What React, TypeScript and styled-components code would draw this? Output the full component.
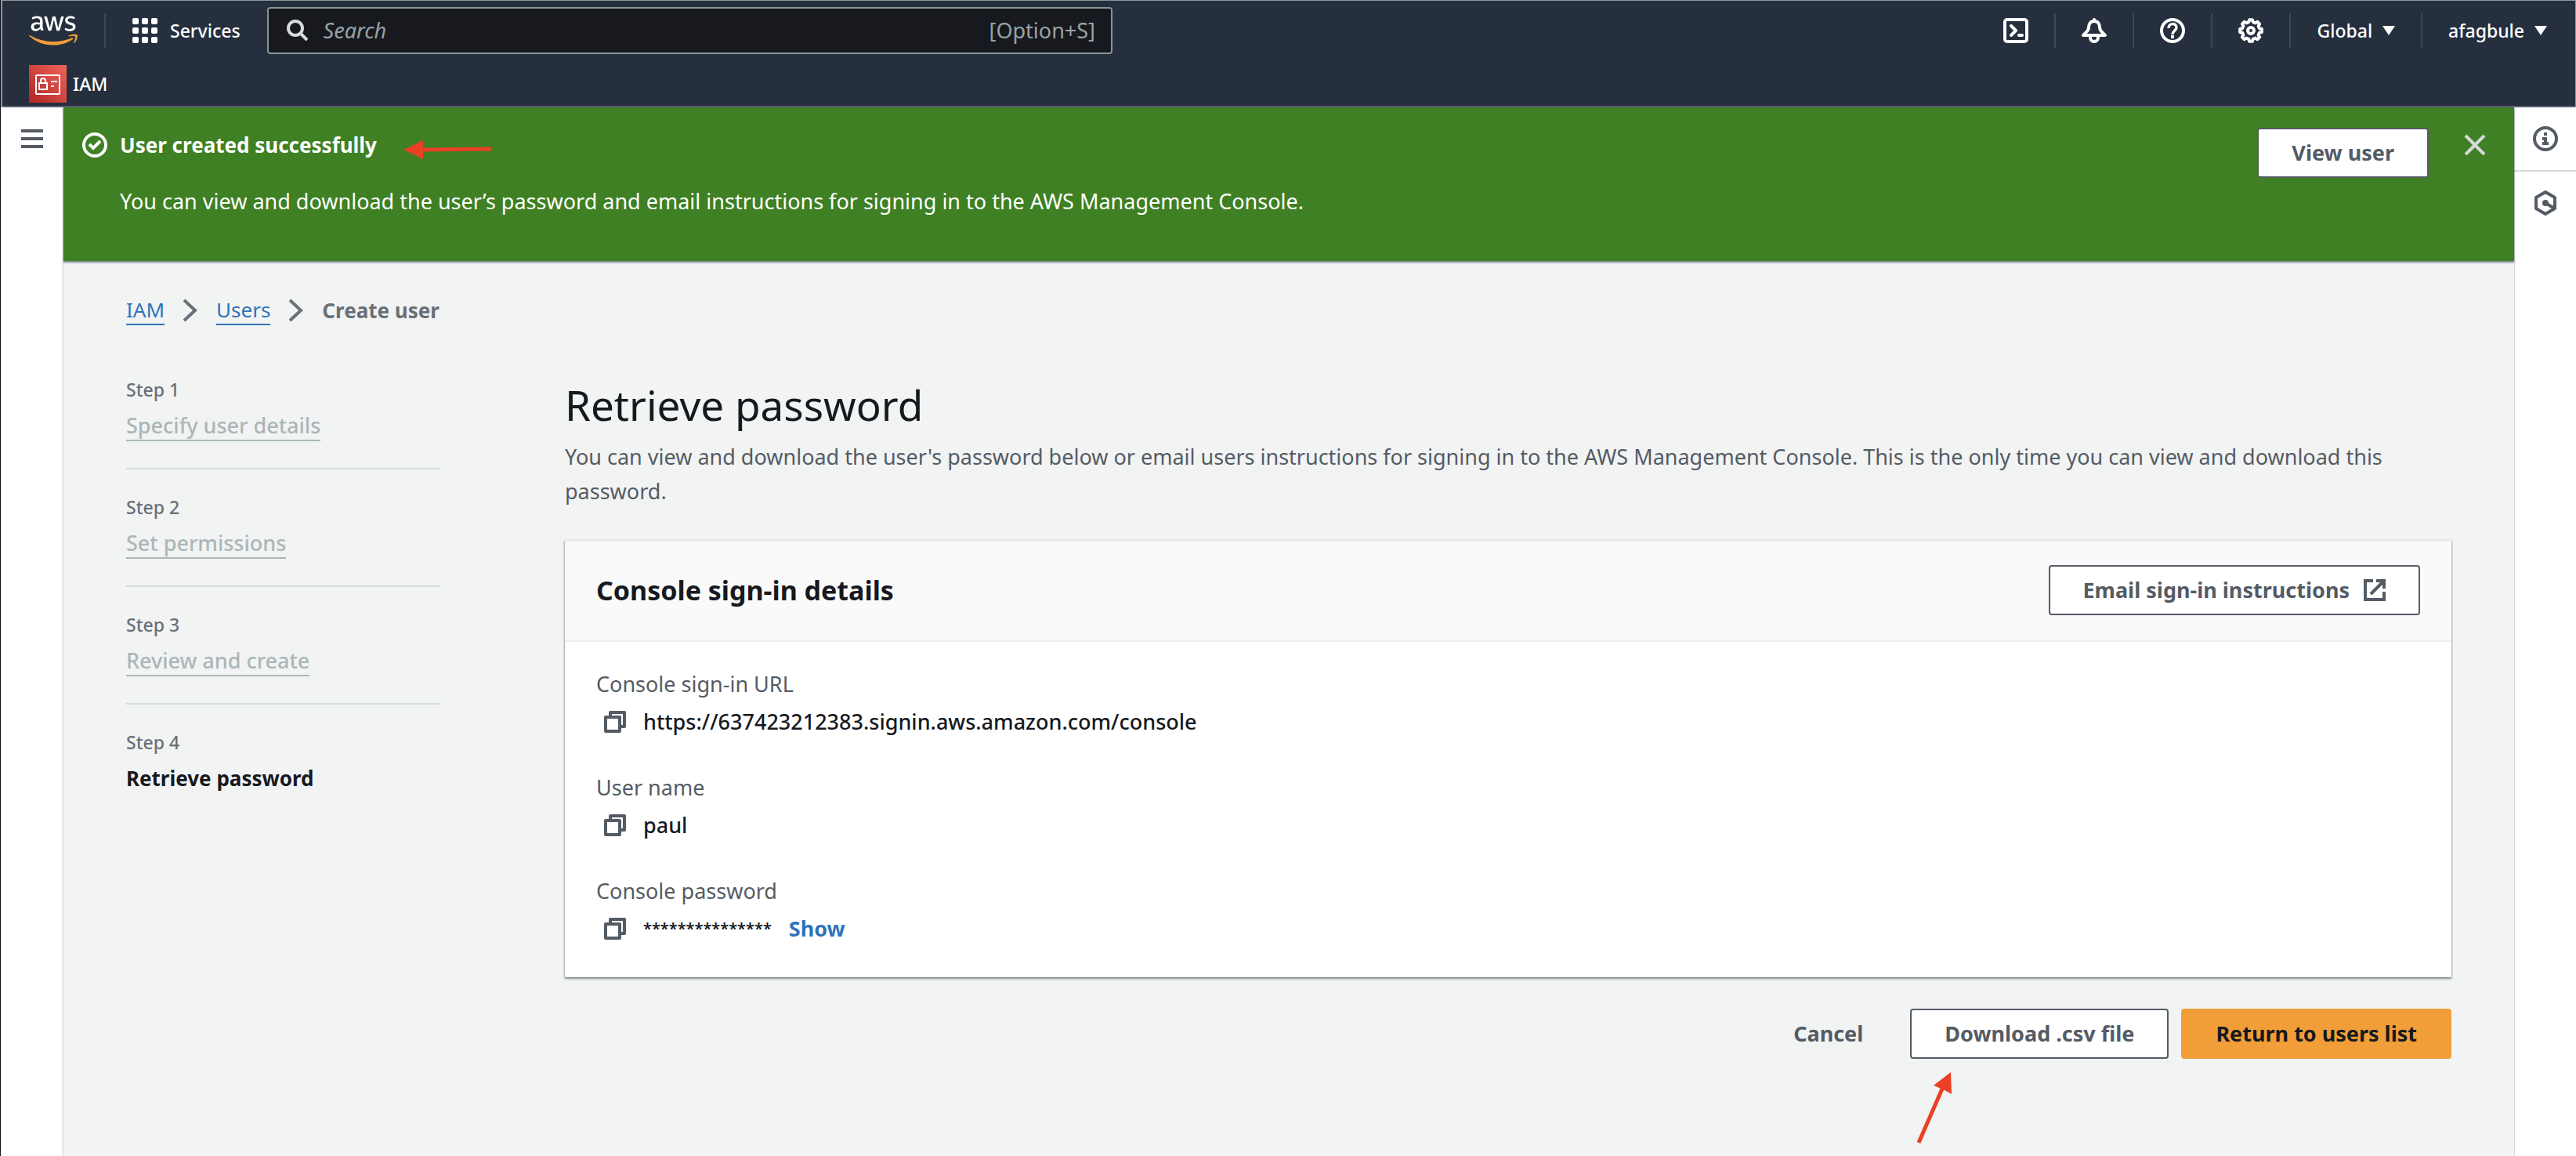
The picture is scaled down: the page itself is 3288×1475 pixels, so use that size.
import React from "react";
import styled, { createGlobalStyle, css } from "styled-components";
import { FaAws } from "react-icons/fa";

const color = {
  ink: "#16191f",
  slate: "#545b64",
  muted: "#687078",
  faint: "#aab7b8",
  line: "#d5dbdb",
  link: "#2e73b8",
  header: "#262f3e",
  green: "#3e8023",
  orange: "#f19e38",
  page: "#f2f3f3",
  arrow: "#ea4025",
};

const GlobalStyle = createGlobalStyle`
  *, *::before, *::after { box-sizing: border-box; }
  body {
    margin: 0;
    background: #fff;
    color: ${color.ink};
    font-family: "Noto Sans", "Open Sans", sans-serif;
    font-size: 27px;
    line-height: 44px;
  }
  button, input { font: inherit; color: inherit; }
  button { background: none; border: 0; padding: 0; cursor: pointer; }
  h1, h2, p, ol, dl, dd { margin: 0; padding: 0; }
  ol { list-style: none; }
`;

const Page = styled.div`
  display: flex;
  flex-direction: column;
  min-height: 100vh;
  border-left: 1px solid #10121c;
`;

/* ---------- header ---------- */

const Header = styled.header`
  background: ${color.header};
  color: #fff;
  border: solid #8d979b;
  border-width: 1px 1px 0 2px;
  font-size: 23px;
  font-weight: 500;
`;

const TopRow = styled.div`
  display: flex;
  align-items: center;
  justify-content: space-between;
  gap: 34px;
  height: 76px;
  padding: 0 36px 0 34px;
`;

const TopGroup = styled.div<{ $grow?: boolean }>`
  display: flex;
  align-items: center;
  gap: 33px;
  ${(p) => p.$grow && css`
    flex: 0 1 1383px;
    gap: 34px;
  `}
`;

const AwsLink = styled.a`
  display: flex;
  color: #fff;
`;

const AwsMark = styled(FaAws)`
  width: 62px;
  height: 50px;
  fill: url(#aws-fill);
`;

const Divider = styled.span`
  width: 2px;
  height: 44px;
  background: #424650;
`;

const NavButton = styled.button<{ $gap?: number }>`
  display: flex;
  align-items: center;
  gap: ${(p) => p.$gap ?? 16}px;
`;

const SearchBox = styled.label`
  flex: 1 1 auto;
  display: flex;
  align-items: center;
  gap: 20px;
  height: 60px;
  padding: 0 20px 0 22px;
  background: #18191e;
  border: 2px solid #879596;
  border-radius: 4px;
  color: #95a5a6;
  font-size: 27px;
  font-weight: 400;
`;

const SearchInput = styled.input`
  flex: 1;
  min-width: 0;
  border: 0;
  padding: 0;
  outline: 0;
  background: transparent;
  &::placeholder {
    color: #95a5a6;
    font-style: italic;
    opacity: 1;
  }
`;

const Favorites = styled.nav`
  display: flex;
  height: 60px;
  padding: 6px 34px 4px;
  border-bottom: 2px solid #5a5f6e;
`;

const FavoriteLink = styled.a`
  display: flex;
  align-items: center;
  gap: 8px;
  color: #fff;
  text-decoration: none;
`;

/* ---------- frame ---------- */

const Body = styled.div`
  flex: 1;
  display: flex;
`;

const Rail = styled.aside<{ $width: number }>`
  flex: 0 0 ${(p) => p.$width}px;
  background: #fff;
  color: ${color.slate};
`;

const RailButton = styled.button<{ $ruled?: boolean }>`
  display: flex;
  align-items: center;
  justify-content: center;
  width: 100%;
  height: 80px;
  ${(p) => p.$ruled && css`
    box-sizing: content-box;
    border-bottom: 2px solid ${color.line};
  `}
`;

const Main = styled.main`
  flex: 1;
  min-width: 0;
  background: ${color.page};
  box-shadow: 0 0 2px rgba(0, 28, 36, 0.5);
  clip-path: inset(0 -4px);
`;

const Banner = styled.section`
  display: flex;
  align-items: flex-start;
  justify-content: space-between;
  padding: 26px 36px 54px 24px;
  background: ${color.green};
  color: #fff;
  box-shadow: 0 2px 2px rgba(0, 28, 36, 0.5);
`;

const BannerMessage = styled.div`
  display: flex;
  align-items: flex-start;
  gap: 16px;
`;

const BannerText = styled.div`
  display: flex;
  flex-direction: column;
  gap: 28px;
`;

const BannerTitle = styled.div`
  display: flex;
  align-items: center;
  gap: 34px;
  font-size: 26px;
  font-weight: 700;
`;

const BannerCopy = styled.p`
  font-weight: 450;
`;

const BannerActions = styled.div`
  display: flex;
  align-items: flex-start;
  gap: 45px;
`;

const IconSlot = styled.span`
  display: flex;
  align-items: center;
  height: 44px;
`;

const CloseButton = styled.button`
  display: flex;
  align-items: center;
  height: 44px;
  color: ${color.line};
`;

const TitleArrow = styled.svg`
  margin-top: 12px;
`;

/* ---------- page content ---------- */

const Content = styled.div`
  padding: 41px 80px 120px 80px;
`;

const Crumbs = styled.nav`
  display: flex;
  align-items: center;
  gap: 24px;
  color: ${color.muted};
  font-size: 26px;
  font-weight: 450;
`;

const CrumbLink = styled.a`
  color: ${color.link};
  text-decoration: none;
  line-height: 36px;
  border-bottom: 2px solid;
`;

const Current = styled.span`
  font-size: 26px;
  font-weight: 700;
`;

const Columns = styled.div`
  display: grid;
  grid-template-columns: 400px minmax(0, 1fr);
  gap: 160px;
  margin-top: 59px;
`;

const StepItem = styled.li`
  & + & {
    margin-top: 28px;
    padding-top: 28px;
    border-top: 2px solid ${color.line};
  }
`;

const StepLabel = styled.div`
  color: ${color.muted};
  font-size: 23px;
  font-weight: 500;
  line-height: 40px;
`;

const StepTitle = styled.div`
  line-height: 52px;
`;

const StepLink = styled.a`
  color: ${color.faint};
  text-decoration: none;
  border-bottom: 2px solid;
  font-weight: 500;
`;

const Title = styled.h1`
  font-size: 53px;
  font-weight: 450;
  line-height: 80px;
`;

const Lead = styled.p`
  margin-top: 4px;
  color: ${color.slate};
`;

const Panel = styled.section`
  margin-top: 40px;
  background: #fff;
  border-top: 2px solid #eaeded;
  box-shadow: 0 1px 2px rgba(0, 28, 36, 0.5), 0 2px 3px rgba(0, 28, 36, 0.3);
`;

const PanelHeader = styled.div`
  display: flex;
  align-items: center;
  justify-content: space-between;
  padding: 30px 40px 32px;
  background: #fafafa;
  border-bottom: 2px solid #eaeded;
`;

const PanelTitle = styled.h2`
  font-size: 34px;
  font-weight: 700;
  line-height: 44px;
`;

const Details = styled.dl`
  display: flex;
  flex-direction: column;
  gap: 40px;
  padding: 32px 40px 40px;
`;

const Label = styled.dt`
  color: ${color.slate};
`;

const Value = styled.dd`
  display: flex;
  align-items: center;
  gap: 22px;
  margin-top: 4px;
  padding-left: 10px;
  font-weight: 500;
`;

const CopyButton = styled.button`
  display: flex;
  color: ${color.slate};
`;

const Masked = styled.span`
  font-size: 20px;
  font-weight: 600;
`;

const ShowButton = styled.button`
  color: ${color.link};
  font-weight: 700;
`;

const Button = styled.button<{ $kind?: "primary" | "link" }>`
  display: flex;
  align-items: center;
  gap: 18px;
  height: 64px;
  padding: 0 42px;
  border: 2px solid ${color.slate};
  border-radius: 4px;
  background: #fff;
  color: ${color.slate};
  font-weight: 700;
  ${(p) => p.$kind === "primary" && css`
    background: ${color.orange};
    border-color: ${color.orange};
    color: ${color.ink};
  `}
  ${(p) => p.$kind === "link" && css`
    background: transparent;
    border-color: transparent;
  `}
`;

const Actions = styled.div`
  display: flex;
  justify-content: flex-end;
  gap: 16px;
  margin-top: 40px;
`;

const Pointed = styled.div`
  position: relative;
`;

const FileArrow = styled.svg`
  position: absolute;
  top: 80px;
  left: 8px;
`;

/* ---------- icons ---------- */

type IconProps = { size?: number; children: React.ReactNode; round?: boolean };

const Icon = ({ size = 32, children, round }: IconProps) => (
  <svg
    width={size}
    height={size}
    viewBox={`0 0 ${size} ${size}`}
    fill="none"
    stroke="currentColor"
    strokeWidth={4}
    strokeLinejoin={round ? "round" : "miter"}
    strokeLinecap={round ? "round" : "butt"}
    aria-hidden="true"
  >
    {children}
  </svg>
);

const GridIcon = () => (
  <Icon>
    {[0, 12, 24].map((y) =>
      [0, 12, 24].map((x) => (
        <rect key={`${x}-${y}`} x={x} y={y} width="8" height="8" rx="2" fill="currentColor" stroke="none" />
      ))
    )}
  </Icon>
);

const SearchIcon = () => (
  <svg width="28" height="28" viewBox="0 0 28 28" fill="none" stroke="#d5dbdb" strokeWidth="4" aria-hidden="true">
    <circle cx="12" cy="11" r="9" />
    <path d="M18 17l9 9" />
  </svg>
);

const TerminalIcon = () => (
  <Icon round>
    <rect x="2" y="2" width="28" height="28" rx="3" />
    <path d="M10 10l6 6-6 6M20 22h4" />
  </Icon>
);

const BellIcon = () => (
  <Icon round>
    <path d="M16 2v2M16 4c-5 0-7 4-7 8 0 5-4 6-7 10h28c-3-4-7-5-7-10 0-4-2-8-7-8z" />
    <path d="M11 23v2a5 5 0 0 0 10 0v-2" />
  </Icon>
);

const HelpIcon = () => (
  <Icon>
    <circle cx="16" cy="16" r="14" />
    <path d="M11 13c0-7 10-7 10-1 0 4-5 4-5 9" strokeWidth="3.5" />
    <path d="M14 24h4" />
  </Icon>
);

const gearPoints = Array.from({ length: 8 }, (_, k) =>
  [[-14, 11.2], [-8, 14], [8, 14], [14, 11.2]].map(([offset, radius]) => {
    const angle = ((k * 45 + offset) * Math.PI) / 180;
    return `${(16 + radius * Math.sin(angle)).toFixed(2)},${(16 - radius * Math.cos(angle)).toFixed(2)}`;
  })
)
  .flat()
  .join(" ");

const GearIcon = () => (
  <Icon round>
    <polygon points={gearPoints} />
    <circle cx="16" cy="16" r="4" />
  </Icon>
);

const CheckIcon = () => (
  <Icon>
    <circle cx="16" cy="16" r="14" />
    <path d="M9 15l5 5 9-9" />
  </Icon>
);

const InfoIcon = () => (
  <Icon>
    <circle cx="16" cy="16" r="14" />
    <path d="M14 8h4v4h-4zM12 14h6v6h2v4h-8v-4h2v-2h-2z" fill="currentColor" stroke="none" />
  </Icon>
);

const HexIcon = () => (
  <Icon round>
    <polygon points="16,2 28,9 28,23 16,30 4,23 4,9" />
    <circle cx="16" cy="16" r="4" fill="currentColor" stroke="none" />
    <path d="M16 16l10 6" />
  </Icon>
);

const MenuIcon = () => (
  <Icon size={28}>
    <path d="M0 4h28M0 14h28M0 24h28" />
  </Icon>
);

const CloseIcon = () => (
  <Icon size={28}>
    <path d="M2 2l24 24M26 2L2 26" />
  </Icon>
);

const CopyIcon = () => (
  <Icon size={28} round>
    <rect x="2" y="8" width="18" height="18" />
    <path d="M8 6V2h18v18h-4" strokeLinecap="butt" />
  </Icon>
);

const ExternalIcon = () => (
  <Icon size={28}>
    <path d="M12 2H2v24h24V16M16 2h10v10M26 2L9 19" />
  </Icon>
);

const ChevronIcon = () => (
  <svg width="18" height="30" viewBox="0 0 18 30" fill="none" stroke="currentColor" strokeWidth="4" aria-hidden="true">
    <path d="M1 2l14 13L1 28" />
  </svg>
);

const Caret = () => (
  <svg width="16" height="12" viewBox="0 0 16 12" aria-hidden="true">
    <path d="M0 0h16L8 12z" fill="currentColor" />
  </svg>
);

const IamIcon = () => (
  <svg width="48" height="48" viewBox="0 0 48 48" fill="none" stroke="#fff" strokeWidth="2" aria-hidden="true">
    <defs>
      <linearGradient id="iam-fill" x1="0" y1="1" x2="1" y2="0">
        <stop offset="0" stopColor="#b02523" />
        <stop offset="1" stopColor="#ee655c" />
      </linearGradient>
    </defs>
    <rect width="48" height="48" fill="url(#iam-fill)" stroke="none" />
    <rect x="9" y="13" width="30" height="24" rx="1" />
    <rect x="13" y="23" width="10" height="8" />
    <path d="M15 23v-3a3 3 0 0 1 6 0v3M28 21h8M28 27h4" />
  </svg>
);

const AwsLogo = () => (
  <>
    <svg width="0" height="0" aria-hidden="true">
      <linearGradient id="aws-fill" x1="0" y1="0" x2="0" y2="1">
        <stop offset="0.6" stopColor="#fff" />
        <stop offset="0.6" stopColor="#f19e38" />
      </linearGradient>
    </svg>
    <AwsMark aria-hidden="true" />
  </>
);

/* ---------- data ---------- */

const steps = ["Specify user details", "Set permissions", "Review and create"];

const tools = [
  { name: "CloudShell", icon: <TerminalIcon /> },
  { name: "Notifications", icon: <BellIcon /> },
  { name: "Help", icon: <HelpIcon /> },
  { name: "Settings", icon: <GearIcon /> },
];

export default function App() {
  return (
    <Page>
      <GlobalStyle />
      <Header>
        <TopRow>
          <TopGroup $grow>
            <AwsLink href="#home" aria-label="AWS home">
              <AwsLogo />
            </AwsLink>
            <Divider />
            <NavButton>
              <GridIcon />
              Services
            </NavButton>
            <SearchBox>
              <SearchIcon />
              <SearchInput type="text" placeholder="Search" aria-label="Search" />
              <span>[Option+S]</span>
            </SearchBox>
          </TopGroup>
          <TopGroup>
            {tools.map((tool) => (
              <React.Fragment key={tool.name}>
                <NavButton aria-label={tool.name}>{tool.icon}</NavButton>
                <Divider />
              </React.Fragment>
            ))}
            <NavButton $gap={13}>
              Global
              <Caret />
            </NavButton>
            <Divider />
            <NavButton $gap={13}>
              afagbule
              <Caret />
            </NavButton>
          </TopGroup>
        </TopRow>
        <Favorites>
          <FavoriteLink href="#iam">
            <IamIcon />
            IAM
          </FavoriteLink>
        </Favorites>
      </Header>

      <Body>
        <Rail $width={80}>
          <RailButton aria-label="Open navigation">
            <MenuIcon />
          </RailButton>
        </Rail>

        <Main>
          <Banner>
            <BannerMessage>
              <IconSlot>
                <CheckIcon />
              </IconSlot>
              <BannerText>
                <BannerTitle>
                  User created successfully
                  <TitleArrow width="112" height="24" viewBox="0 0 112 24" aria-hidden="true">
                    <path d="M0 12L25 0v24z" fill={color.arrow} />
                    <path d="M24 12l88-1" stroke={color.arrow} strokeWidth="5" />
                  </TitleArrow>
                </BannerTitle>
                <BannerCopy>
                  You can view and download the user’s password and email instructions for signing in to the AWS
                  Management Console.
                </BannerCopy>
              </BannerText>
            </BannerMessage>
            <BannerActions>
              <Button>View user</Button>
              <CloseButton aria-label="Dismiss">
                <CloseIcon />
              </CloseButton>
            </BannerActions>
          </Banner>

          <Content>
            <Crumbs aria-label="Breadcrumbs">
              <CrumbLink href="#iam">IAM</CrumbLink>
              <ChevronIcon />
              <CrumbLink href="#users">Users</CrumbLink>
              <ChevronIcon />
              <Current>Create user</Current>
            </Crumbs>

            <Columns>
              <ol>
                {steps.map((step, i) => (
                  <StepItem key={step}>
                    <StepLabel>Step {i + 1}</StepLabel>
                    <StepTitle>
                      <StepLink href={`#step-${i + 1}`}>{step}</StepLink>
                    </StepTitle>
                  </StepItem>
                ))}
                <StepItem aria-current="step">
                  <StepLabel>Step 4</StepLabel>
                  <StepTitle>
                    <Current>Retrieve password</Current>
                  </StepTitle>
                </StepItem>
              </ol>

              <div>
                <Title>Retrieve password</Title>
                <Lead>
                  You can view and download the user's password below or email users instructions for signing in to the
                  AWS Management Console. This is the only time you can view and download this password.
                </Lead>

                <Panel>
                  <PanelHeader>
                    <PanelTitle>Console sign-in details</PanelTitle>
                    <Button>
                      Email sign-in instructions
                      <ExternalIcon />
                    </Button>
                  </PanelHeader>
                  <Details>
                    <div>
                      <Label>Console sign-in URL</Label>
                      <Value>
                        <CopyButton aria-label="Copy sign-in URL">
                          <CopyIcon />
                        </CopyButton>
                        https://637423212383.signin.aws.amazon.com/console
                      </Value>
                    </div>
                    <div>
                      <Label>User name</Label>
                      <Value>
                        <CopyButton aria-label="Copy user name">
                          <CopyIcon />
                        </CopyButton>
                        paul
                      </Value>
                    </div>
                    <div>
                      <Label>Console password</Label>
                      <Value>
                        <CopyButton aria-label="Copy password">
                          <CopyIcon />
                        </CopyButton>
                        <Masked>***************</Masked>
                        <ShowButton>Show</ShowButton>
                      </Value>
                    </div>
                  </Details>
                </Panel>

                <Actions>
                  <Button $kind="link">Cancel</Button>
                  <Pointed>
                    <Button>Download .csv file</Button>
                    <FileArrow width="48" height="94" viewBox="0 0 48 94" aria-hidden="true">
                      <path d="M44 1L22 18l12 5 11 6z" fill={color.arrow} />
                      <path d="M34 20L3 91" stroke={color.arrow} strokeWidth="5" />
                    </FileArrow>
                  </Pointed>
                  <Button $kind="primary">Return to users list</Button>
                </Actions>
              </div>
            </Columns>
          </Content>
        </Main>

        <Rail $width={79}>
          <RailButton $ruled aria-label="Info">
            <InfoIcon />
          </RailButton>
          <RailButton aria-label="Resources">
            <HexIcon />
          </RailButton>
        </Rail>
      </Body>
    </Page>
  );
}
